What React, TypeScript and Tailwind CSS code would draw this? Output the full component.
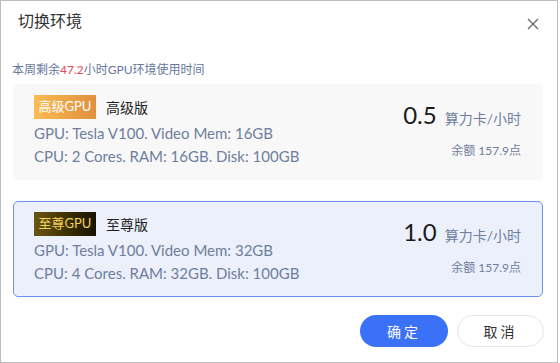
import React from "react";

const font = { fontFamily: 'Lato, "Noto Sans CJK SC", sans-serif' };

function Card({
  badge,
  badgeClass,
  name,
  gpu,
  cpu,
  price,
  selected,
}: {
  badge: string;
  badgeClass: string;
  name: string;
  gpu: string;
  cpu: string;
  price: string;
  selected?: boolean;
}) {
  return (
    <div
      className={`flex justify-between rounded-[5px] border pl-[20px] pr-[21px] pt-[10px] pb-[11px] ${
        selected ? "border-[#6e92f2] bg-[#ebf0fb]" : "border-[#f8f8f9] bg-[#f8f8f9]"
      }`}
    >
      <div className="flex flex-col">
        <div className="flex items-center gap-[10px]">
          <span
            className={`flex h-[24px] w-[62px] items-center justify-center text-[13px] ${badgeClass}`}
          >
            {badge}
          </span>
          <span className="text-[14px] text-[#222]">{name}</span>
        </div>
        <div className="mt-[3px] text-[15px] leading-[23px] text-[#6f7e9d]">{gpu}</div>
        <div className="text-[15px] leading-[23px] text-[#6f7e9d]">{cpu}</div>
      </div>
      <div className="flex flex-col items-end pt-[6px]">
        <div className="flex items-baseline gap-[8px]">
          <span className="text-[24px] leading-[28px] text-[#1a1a1a]">{price}</span>
          <span className="text-[14px] text-[#6f7e9d]">算力卡/小时</span>
        </div>
        <div className="mt-[13px] text-[12px] text-[#6f7e9d]">余额 157.9点</div>
      </div>
    </div>
  );
}

export default function App() {
  return (
    <div className="h-[363px] w-[560px] bg-white" style={font}>
      <div className="flex h-[363px] w-[558px] flex-col border border-[#bdbdbd] bg-white">
        <div className="flex items-center justify-between pl-[17px] pr-[18px] pt-[8px]">
          <span className="text-[16px] leading-[24px] text-[#333]">切换环境</span>
          <svg width="12" height="12" viewBox="0 0 12 12" className="mt-[6px]">
            <path d="M1 1L11 11M11 1L1 11" stroke="#666" strokeWidth="1.3" />
          </svg>
        </div>
        <div className="mt-[29px] pl-[11px] text-[12px] leading-[16px] text-[#66779e]">
          本周剩余<span className="text-[#f0454f]">47.2</span>小时GPU环境使用时间
        </div>
        <div className="mt-[6px] flex flex-col gap-[21px] pl-[12px] pr-[14px]">
          <Card
            badge="高级GPU"
            badgeClass="bg-gradient-to-r from-[#fbbb53] to-[#df903e] text-white"
            name="高级版"
            gpu="GPU: Tesla V100. Video Mem: 16GB"
            cpu="CPU: 2 Cores. RAM: 16GB. Disk: 100GB"
            price="0.5"
          />
          <Card
            badge="至尊GPU"
            badgeClass="bg-gradient-to-r from-[#6e5612] to-[#161200] text-[#f3d25c]"
            name="至尊版"
            gpu="GPU: Tesla V100. Video Mem: 32GB"
            cpu="CPU: 4 Cores. RAM: 32GB. Disk: 100GB"
            price="1.0"
            selected
          />
        </div>
        <div className="mt-[18px] flex justify-end gap-[9px] pr-[13px]">
          <button className="h-[32px] w-[88px] rounded-full bg-[#3b71f7] text-[14px] tracking-[3px] text-white">
            确定
          </button>
          <button className="h-[32px] w-[87px] rounded-full border border-[#e2e6f0] bg-white text-[14px] tracking-[3px] text-[#333]">
            取消
          </button>
        </div>
      </div>
    </div>
  );
}
